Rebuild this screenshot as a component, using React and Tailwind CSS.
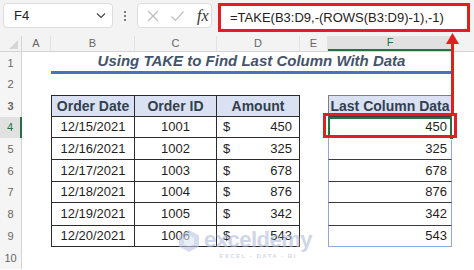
import React from "react";

const orders = [
  ["12/15/2021", "1001", "450"],
  ["12/16/2021", "1002", "325"],
  ["12/17/2021", "1003", "678"],
  ["12/18/2021", "1004", "876"],
  ["12/19/2021", "1005", "342"],
  ["12/20/2021", "1006", "543"],
];

const rowHeights = ["h-[21px]", "h-[22px]", "h-[22px]", "h-[21px]", "h-[23px]", "h-[21px]"];

const RowHead = ({ n, active }) => (
  <div
    className={
      active
        ? "w-[22px] shrink-0 flex items-center justify-center bg-[#e1e1e1] border-r-2 border-[#217346] text-[11px] text-[#217346]"
        : "w-[22px] shrink-0 flex items-center justify-center bg-[#f5f5f5] border-r border-[#d4d4d4] text-[11px] text-[#666]"
    }
  >
    {n}
  </div>
);

const FormulaBar = () => (
  <div className="h-[36px] bg-[#f3f3f3] flex items-start pt-[3px] pl-[3px]">
    <div className="w-[110px] h-[25px] bg-white border border-[#dcdcdc] rounded-[4px] flex items-center justify-between pl-[10px] pr-[6px] text-[13px] text-[#222]">
      <span>F4</span>
      <svg width="10" height="7" viewBox="0 0 10 7">
        <path d="M1 1.5 L5 5.5 L9 1.5" fill="none" stroke="#444" strokeWidth="1.2" />
      </svg>
    </div>
    <div className="w-[24px] h-[25px] flex flex-col items-center justify-center gap-[2px]">
      <span className="w-[2px] h-[2px] bg-[#555] rounded-full" />
      <span className="w-[2px] h-[2px] bg-[#555] rounded-full" />
      <span className="w-[2px] h-[2px] bg-[#555] rounded-full" />
    </div>
    <div className="w-[75px] h-[25px] bg-white border border-[#dcdcdc] rounded-[4px] flex items-center pl-[8px] gap-[10px]">
      <svg width="14" height="14" viewBox="0 0 14 14">
        <path d="M2 2 L12 12 M12 2 L2 12" stroke="#bdbdbd" strokeWidth="1.2" />
      </svg>
      <svg width="15" height="14" viewBox="0 0 15 14">
        <path d="M1.5 7.5 L5.5 11.5 L13.5 2.5" fill="none" stroke="#bdbdbd" strokeWidth="1.2" />
      </svg>
      <span className="font-['Liberation_Serif'] italic text-[16px] text-[#333] leading-none ml-[2px]">fx</span>
    </div>
    <div className="ml-[6px] w-[252px] h-[29px] bg-white border-[3px] border-[#e0201f] flex items-center pl-[9px] text-[13px] text-[#222]">
      =TAKE(B3:D9,-(ROWS(B3:D9)-1),-1)
    </div>
  </div>
);

const ColHeader = () => (
  <div className="h-[16px] flex bg-[#f3f3f3] border-b border-[#d4d4d4] text-[11px] text-[#666]">
    <div className="w-[22px] shrink-0 relative border-r border-[#d4d4d4]">
      <svg className="absolute right-[3px] bottom-[2px]" width="9" height="9" viewBox="0 0 9 9">
        <path d="M9 0 L9 9 L0 9 Z" fill="#d6d6d6" />
      </svg>
    </div>
    <div className="w-[29px] shrink-0 flex items-center justify-center border-r border-[#e2e2e2]">A</div>
    <div className="w-[84px] shrink-0 flex items-center justify-center border-r border-[#e2e2e2]">B</div>
    <div className="w-[82px] shrink-0 flex items-center justify-center border-r border-[#e2e2e2]">C</div>
    <div className="w-[83px] shrink-0 flex items-center justify-center border-r border-[#e2e2e2]">D</div>
    <div className="w-[28px] shrink-0 flex items-center justify-center border-r border-[#e2e2e2]">E</div>
    <div className="w-[124px] shrink-0 flex items-center justify-center bg-[#e1e1e1] border-b-2 border-[#217346] text-[#217346]">F</div>
    <div className="flex-1" />
  </div>
);

export default function App() {
  return (
    <div className="w-[474px] h-[270px] overflow-hidden bg-white relative font-['Liberation_Sans',sans-serif]">
      <FormulaBar />
      <ColHeader />

      {/* row 1: title */}
      <div className="flex h-[22px]">
        <RowHead n="1" />
        <div className="w-[29px] shrink-0" />
        <div className="w-[401px] shrink-0 flex items-center justify-center border-b-[3px] border-[#4472c4] text-[15px] font-bold italic text-[#44546a]">
          Using TAKE to Find Last Column With Data
        </div>
      </div>

      {/* row 2 */}
      <div className="flex h-[21px]">
        <RowHead n="2" />
      </div>

      {/* row 3: headers */}
      <div className="flex h-[22px] text-[14px] font-bold text-[#333f4f]">
        <RowHead n="3" />
        <div className="w-[29px] shrink-0" />
        <div className="w-[84px] shrink-0 flex items-center justify-center bg-[#d9e1f2] border border-[#2b2b2b]">Order Date</div>
        <div className="w-[82px] shrink-0 flex items-center justify-center bg-[#d9e1f2] border-y border-r border-[#2b2b2b]">Order ID</div>
        <div className="w-[83px] shrink-0 flex items-center justify-center bg-[#d9e1f2] border-y border-r border-[#2b2b2b]">Amount</div>
        <div className="w-[28px] shrink-0" />
        <div className="w-[124px] shrink-0 flex items-center justify-center bg-[#d9e1f2] border border-[#7f7f7f] border-b-[#3c3c3c]">Last Column Data</div>
      </div>

      {orders.map(([date, id, amt], i) => (
        <div key={id} className={`flex text-[13px] text-[#1f1f1f] ${rowHeights[i]}`}>
          <RowHead n={String(i + 4)} active={i === 0} />
          <div className="w-[29px] shrink-0" />
          <div className="w-[84px] shrink-0 flex items-center justify-center border-x border-b border-[#2b2b2b]">{date}</div>
          <div className="w-[82px] shrink-0 flex items-center justify-center border-r border-b border-[#2b2b2b]">{id}</div>
          <div className="w-[83px] shrink-0 flex items-center justify-between pl-[6px] pr-[7px] border-r border-b border-[#2b2b2b]">
            <span>$</span>
            <span>{amt}</span>
          </div>
          <div className="w-[28px] shrink-0" />
          <div
            className={
              i === 5
                ? "w-[124px] shrink-0 flex items-center justify-end pr-[4px] border-x border-b border-[#8eaadb]"
                : "w-[124px] shrink-0 flex items-center justify-end pr-[4px] border-x border-[#8eaadb] border-b border-b-[#3c3c3c]"
            }
          >
            {amt}
          </div>
        </div>
      ))}

      <div className="flex h-[22px]">
        <RowHead n="10" />
      </div>

      {/* selected cell F4 */}
      <div className="absolute left-[328px] top-[117px] w-[124px] h-[21px] border-2 border-[#217346]">
        <span className="absolute -right-[4px] -bottom-[4px] w-[5px] h-[5px] bg-[#217346] border border-white" />
      </div>

      {/* annotation: red box around F4 + arrow */}
      <div className="absolute left-[323px] top-[113px] w-[134px] h-[25px] border-[3px] border-[#e0201f]" />
      <div className="absolute left-[451px] top-[42px] w-[3px] h-[71px] bg-[#e0201f]" />
      <svg className="absolute left-[446px] top-[33px]" width="13" height="11" viewBox="0 0 13 11">
        <path d="M6.5 0 L13 11 L0 11 Z" fill="#e0201f" />
      </svg>

      {/* watermark */}
      <div className="absolute left-[177px] top-[229px] flex items-start gap-[3px] opacity-60 pointer-events-none">
        <svg width="24" height="24" viewBox="0 0 24 24">
          <path d="M12 1 L22 6.5 L22 17.5 L12 23 L2 17.5 L2 6.5 Z" fill="#b9c6e2" />
          <path d="M12 6 L17 9 L17 15 L12 18 L7 15 L7 9 Z" fill="#dfe6f3" />
        </svg>
        <div className="flex flex-col items-center leading-none">
          <span className="text-[22px] font-bold text-[#aebbd8] tracking-[-0.5px]">exceldemy</span>
          <span className="text-[6px] font-bold text-[#b7bfcf] tracking-[1.5px] mt-[2px]">EXCEL · DATA · BI</span>
        </div>
      </div>
    </div>
  );
}
